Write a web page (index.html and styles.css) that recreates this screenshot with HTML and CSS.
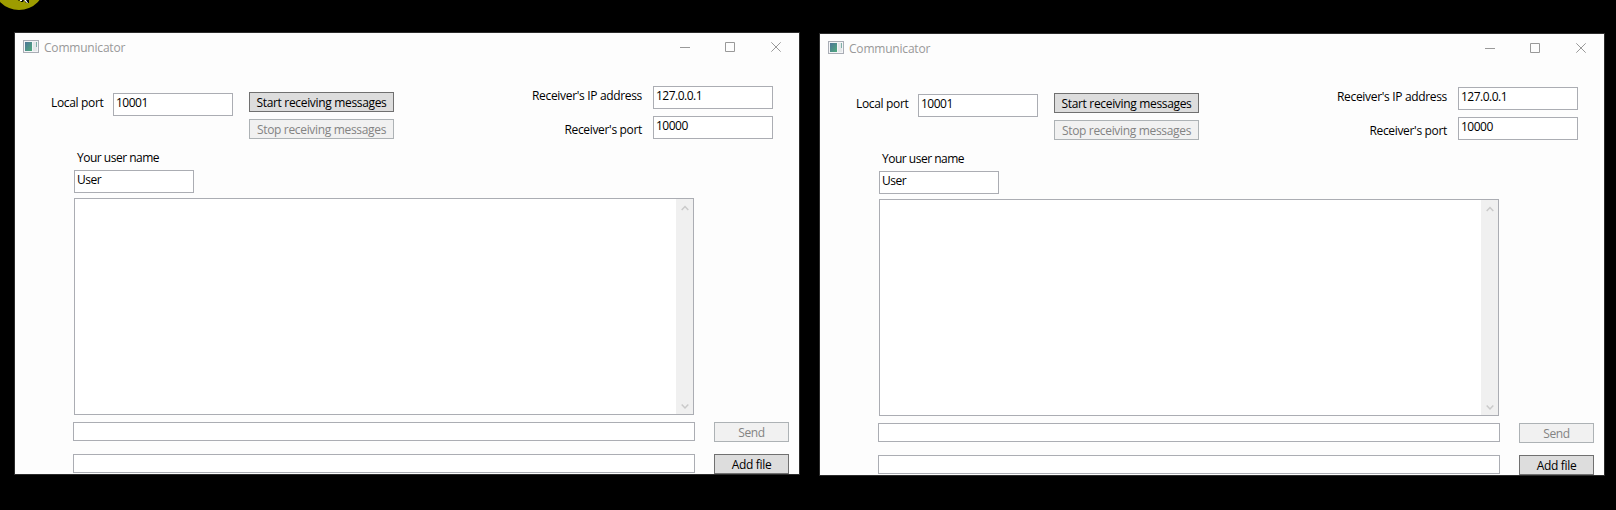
FILE: index.html
```html
<!DOCTYPE html>
<html lang="en">
<head>
<meta charset="utf-8">
<title>Communicator</title>
<link rel="stylesheet" href="styles.css">
</head>
<body>
<svg class="pointer" width="50" height="16" viewBox="0 0 50 16">
  <circle cx="19" cy="-16" r="26" fill="#9d9c00"/>
  <path d="M18 0h11v3h-3l-2-3-1 2h-2l-1-2-1 1z" fill="#000"/>
  <path d="M20 0h2v1h-2zM24 0h2l2 3h-1z" fill="#fff"/>
</svg>
<main class="desktop">
  <section class="window">
    <header class="titlebar">
      <svg class="app-icon" width="16" height="14" viewBox="0 0 16 14">
        <rect x=".5" y=".5" width="15" height="12" fill="#f4f5f7" stroke="#a9adb5"/>
        <rect x="2" y="2" width="7" height="9" fill="url(#app-fill)"/>
        <rect x="10" y="2" width="4" height="9" fill="#e4e7e9"/>
        <rect x="13" y="2" width="1" height="5" fill="#7fb0a8"/>
        <defs><linearGradient id="app-fill" x1="0" y1="0" x2="1" y2="1"><stop stop-color="#4d7598"/><stop offset="1" stop-color="#4faa7c"/></linearGradient></defs>
      </svg>
      <h1 class="title">Communicator</h1>
      <div class="controls">
        <svg width="11" height="11" viewBox="0 0 11 11"><path d="M1 5.5H11"/></svg>
        <svg width="11" height="11" viewBox="0 0 11 11"><path d="M.5 .5H9.5V9.5H.5Z"/></svg>
        <svg width="11" height="11" viewBox="0 0 11 11"><path d="M.3 .3L9.7 9.7M9.7 .3L.3 9.7"/></svg>
      </div>
    </header>
    <div class="settings">
      <div class="local"><span class="label local-label">Local port</span><div class="field">10001</div></div>
      <div class="actions"><button class="button wide">Start receiving messages</button><button class="button wide" disabled>Stop receiving messages</button></div>
      <div class="receiver">
        <div class="receiver-row"><span class="label ip-label">Receiver's IP address</span><div class="field">127.0.0.1</div></div>
        <div class="receiver-row"><span class="label port-label">Receiver's port</span><div class="field">10000</div></div>
      </div>
    </div>
    <div class="chat">
      <span class="label user-label">Your user name</span>
      <div class="field">User</div>
      <div class="messages"><div class="scrollbar">
        <svg width="8" height="7" viewBox="0 0 8 7"><path d="M.7 5L4 1.5L7.3 5"/></svg>
        <svg width="8" height="7" viewBox="0 0 8 7"><path d="M.7 1.5L4 5L7.3 1.5"/></svg>
      </div></div>
    </div>
    <div class="compose">
      <div class="line"></div><button class="button" disabled>Send</button>
      <div class="line"></div><button class="button">Add file</button>
    </div>
  </section>
  <section class="window second">
    <header class="titlebar">
      <svg class="app-icon" width="16" height="14" viewBox="0 0 16 14">
        <rect x=".5" y=".5" width="15" height="12" fill="#f4f5f7" stroke="#a9adb5"/>
        <rect x="2" y="2" width="7" height="9" fill="url(#app-fill)"/>
        <rect x="10" y="2" width="4" height="9" fill="#e4e7e9"/>
        <rect x="13" y="2" width="1" height="5" fill="#7fb0a8"/>
      </svg>
      <h1 class="title">Communicator</h1>
      <div class="controls">
        <svg width="11" height="11" viewBox="0 0 11 11"><path d="M1 5.5H11"/></svg>
        <svg width="11" height="11" viewBox="0 0 11 11"><path d="M.5 .5H9.5V9.5H.5Z"/></svg>
        <svg width="11" height="11" viewBox="0 0 11 11"><path d="M.3 .3L9.7 9.7M9.7 .3L.3 9.7"/></svg>
      </div>
    </header>
    <div class="settings">
      <div class="local"><span class="label local-label">Local port</span><div class="field">10001</div></div>
      <div class="actions"><button class="button wide">Start receiving messages</button><button class="button wide" disabled>Stop receiving messages</button></div>
      <div class="receiver">
        <div class="receiver-row"><span class="label ip-label">Receiver's IP address</span><div class="field">127.0.0.1</div></div>
        <div class="receiver-row"><span class="label port-label">Receiver's port</span><div class="field">10000</div></div>
      </div>
    </div>
    <div class="chat">
      <span class="label user-label">Your user name</span>
      <div class="field">User</div>
      <div class="messages"><div class="scrollbar">
        <svg width="8" height="7" viewBox="0 0 8 7"><path d="M.7 5L4 1.5L7.3 5"/></svg>
        <svg width="8" height="7" viewBox="0 0 8 7"><path d="M.7 1.5L4 5L7.3 1.5"/></svg>
      </div></div>
    </div>
    <div class="compose">
      <div class="line"></div><button class="button" disabled>Send</button>
      <div class="line"></div><button class="button">Add file</button>
    </div>
  </section>
</main>
</body>
</html>
```

FILE: styles.css
```css
* { box-sizing: border-box; }
body { margin: 0; height: 510px; overflow: hidden; background: #000; color: #000; font: 12px/16px "Open Sans", "Noto Sans", sans-serif; letter-spacing: -0.33px; }
svg { display: block; }
.pointer { position: absolute; left: 0; top: 0; }
.desktop { display: flex; gap: 19px; padding: 32px 0 0 14px; }
.window { flex: none; width: 786px; height: 443px; border: 1px solid #2b2b2b; background: #fdfdfd; overflow: hidden; }
.second { margin-top: 1px; }
.titlebar { display: flex; align-items: flex-start; height: 53px; padding: 7px 17px 0 8px; }
.title { margin: 0 0 0 5px; font-size: 12px; font-weight: 400; color: #999; letter-spacing: -0.2px; }
.controls { display: flex; gap: 35px; margin: 2px 0 0 auto; }
.controls svg { fill: none; stroke: #999; }
.settings { display: flex; align-items: flex-start; height: 63px; padding-right: 26px; }
.label { white-space: nowrap; }
.local { display: flex; padding: 7px 0 0 36px; }
.local-label { width: 62px; padding-top: 2px; }
.field { width: 120px; height: 23px; padding: 1px 2px; border: 1px solid #abadb3; background: #fff; letter-spacing: -0.5px; }
.actions { display: grid; gap: 7px; margin: 6px 0 0 16px; }
.button { width: 75px; height: 20px; padding: 2px 0 0; border: 1px solid #707070; border-radius: 0; background: #ddd; color: #000; font: inherit; letter-spacing: inherit; white-space: nowrap; }
.button:disabled { border-color: #adb2b5; background: #f1f1f1; color: #838383; }
.wide { width: 145px; }
.receiver { display: grid; gap: 7px; margin-left: auto; }
.receiver-row { display: flex; justify-content: flex-end; gap: 11px; }
.ip-label { padding-top: 2px; }
.port-label { padding-top: 6px; }
.chat { padding-left: 59px; }
.user-label { display: block; height: 21px; padding: 1px 0 0 3px; letter-spacing: -0.5px; }
.messages { display: flex; justify-content: flex-end; width: 620px; height: 217px; margin-top: 5px; border: 1px solid #abadb3; background: #fff; }
.scrollbar { display: flex; flex-direction: column; justify-content: space-between; align-items: center; width: 17px; padding: 6px 0 4px; background: #f0f0f0; }
.scrollbar svg { fill: none; stroke: #cacaca; stroke-width: 1.5; }
.compose { display: grid; grid-template-columns: 622px 75px; column-gap: 19px; row-gap: 12px; padding: 7px 0 0 58px; }
.line { height: 19px; border: 1px solid #abadb3; background: #fff; }
```
